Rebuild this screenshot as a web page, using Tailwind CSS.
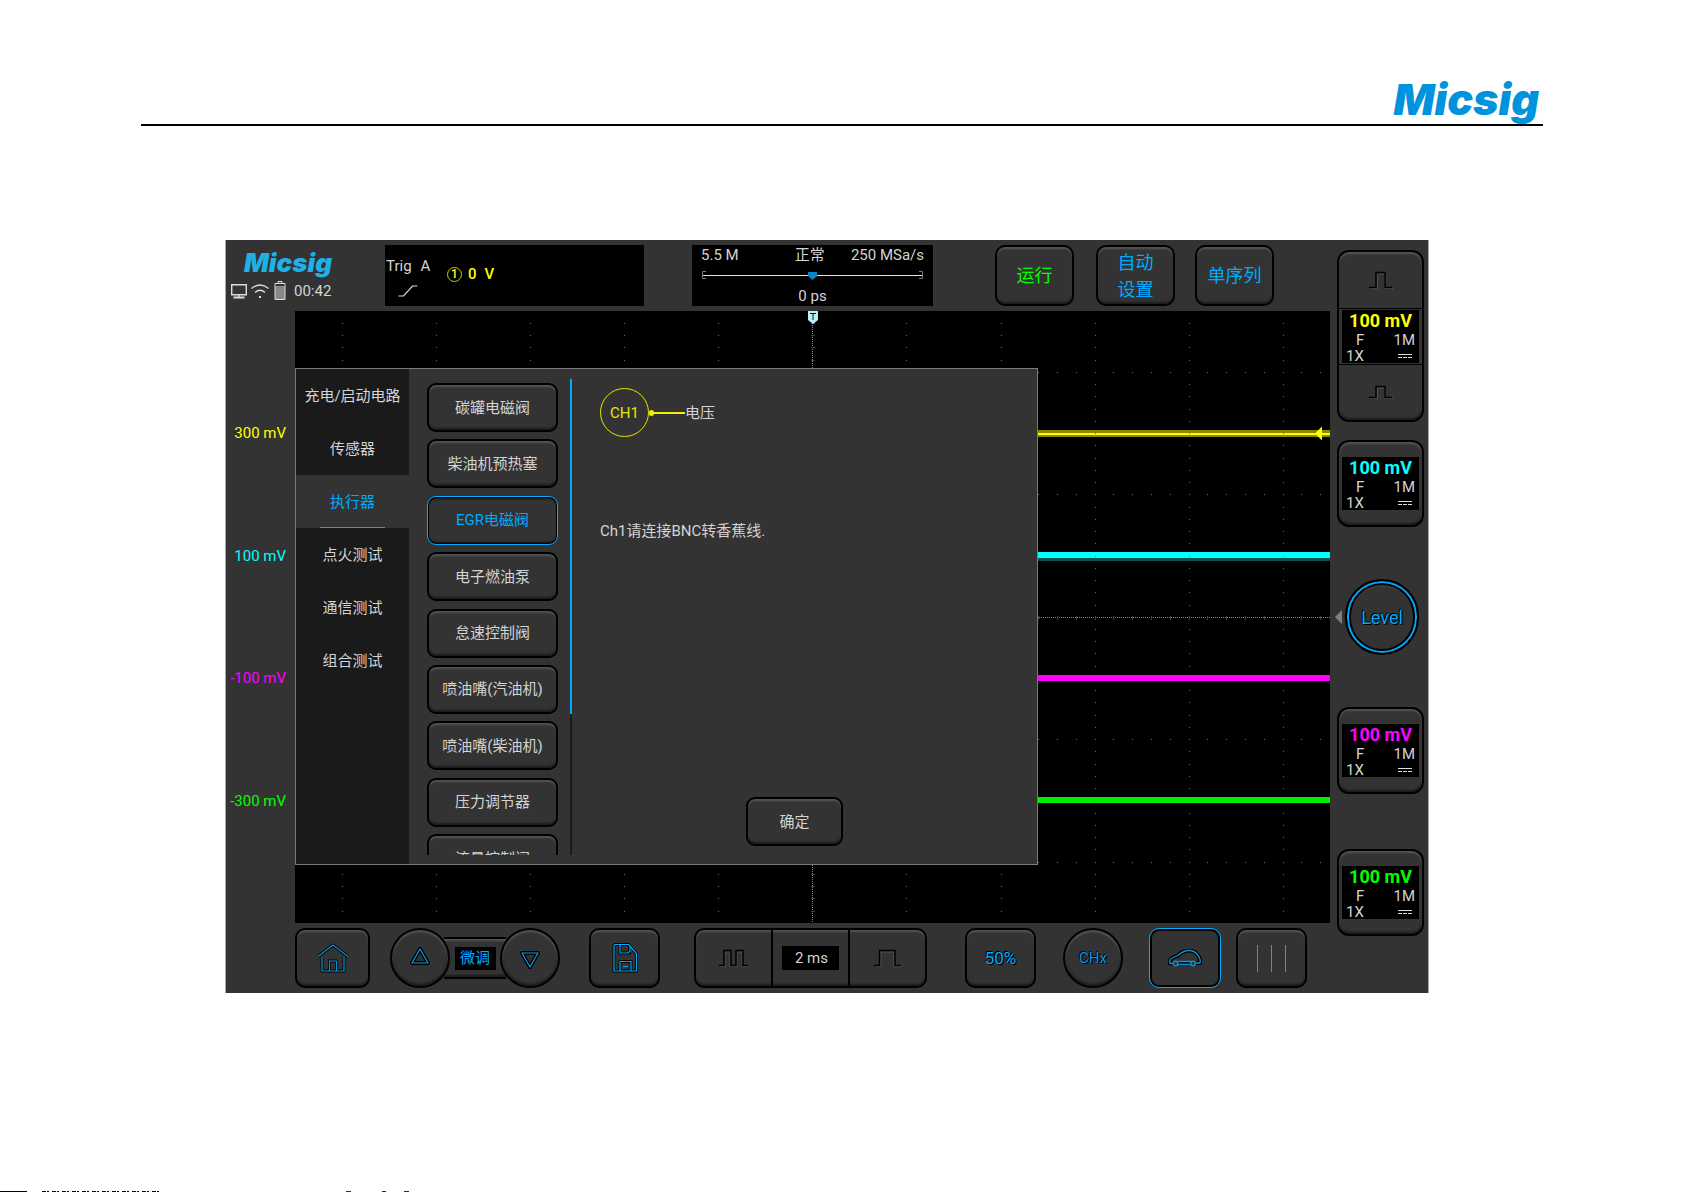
<!DOCTYPE html>
<html lang="zh-CN">
<head>
  <meta charset="UTF-8" />
  <meta name="viewport" content="width=device-width, initial-scale=1.0"/>
  <title>Micsig</title>
  <script src="https://cdn.jsdelivr.net/npm/@tailwindcss/browser@4"></script>
</head>
<body class="flex min-h-screen flex-col bg-white font-['Roboto','Noto_Sans_CJK_SC',sans-serif] text-[15px] leading-5 text-[#d4d4d4]">

  <!-- Page header -->
  <header class="mr-[142px] ml-[141px] mt-[76px] flex h-[50px] justify-end border-b-2 border-black pr-1">
    <div class="font-['Inter',sans-serif] text-[43px] leading-[46px] font-black italic text-[#0093dd]">Micsig</div>
  </header>

  <!-- Oscilloscope screen -->
  <main class="mt-[114px] mr-[256px] ml-[225px] grid grid-cols-[69px_minmax(0,1fr)_98px] grid-rows-[71px_612px_70px] border-r border-l border-[#a8a8a8] bg-[#333]">

    <!-- Top bar -->
    <div class="col-span-2 flex items-start pt-[5px]">
      <div class="w-[159px] shrink-0 pl-1">
        <div class="pt-[6px] pl-[14px] font-['Inter',sans-serif] text-[26px] leading-[24px] font-black italic text-[#1fb0e6]">Micsig</div>
        <div class="mt-[6px] flex items-center gap-[3px]">
          <svg class="h-[20px] w-[18px]" viewBox="0 0 18 20" fill="none" stroke="#ddd" stroke-width="1.4">
            <path d="M1.7 3.7h14.6v10H1.7zM9 14v2"/><path d="M3.500 16.500h11" stroke-width="2"/>
          </svg>
          <svg class="h-[20px] w-[18px]" viewBox="0 0 18 20" fill="none" stroke="#ddd" stroke-width="1.3">
            <path d="M0.500 7.500q8.500-7 17 0M4 11.500q5-4.500 10 0"/><path d="M8 16h2" stroke-width="2"/>
          </svg>
          <svg class="ml-[2px] h-[20px] w-[12px]" viewBox="0 0 12 20" fill="none" stroke="#ddd">
            <path d="M1 2.500h10v16H1z" fill="#888"/><path d="M1.500 3h9v2h-9z" fill="#333" stroke="none"/><path d="M4 2V0.500h4V2"/>
          </svg>
          <span class="ml-[5px]">00:42</span>
        </div>
      </div>
      <div class="flex h-[61px] w-[259px] shrink-0 bg-black">
        <div class="w-[62px] pt-[11px] pl-px">
          <div class="flex gap-[9px]"><span>Trig</span><span>A</span></div>
          <svg class="mt-2 ml-3 h-[14px] w-[20px]" viewBox="0 0 20 14" fill="none" stroke="#ddd" stroke-width="1.2"><path d="M0.500 12h5l9-10h5"/></svg>
        </div>
        <div class="flex h-[58px] items-center font-medium text-[#ff0]">
          <span class="flex h-[15px] w-[15px] items-center justify-center rounded-full border border-[#cc0] text-[12px]">1</span>
          <span class="ml-[6px]">0</span><span class="ml-2">V</span>
        </div>
      </div>
      <div class="ml-[48px] flex h-[61px] w-[241px] shrink-0 flex-col bg-black px-[9px]">
        <div class="flex justify-between"><span>5.5 M</span><span class="pl-[30px]">正常</span><span>250 MSa/s</span></div>
        <svg class="mt-1 h-[12px] w-full" viewBox="0 0 223 12" fill="none">
          <path d="M5 2.500H1.500v7H5M218 2.500h3.500v7H218" stroke="#77778c"/>
          <path d="M2 6.500h219" stroke="#ff0" stroke-width="1.200"/>
          <path d="M107 3h9v4l-4.500 4L107 7z" fill="#0a86c8"/>
        </svg>
        <div class="mt-[5px] text-center">0 ps</div>
      </div>
      <button class="ml-[62px] h-[61px] w-[79px] shrink-0 rounded-[10px] border-2 border-black text-[18px] text-[#0f0] shadow-[inset_0_2px_2px_#555,inset_0_-2px_2px_#1c1c1c]">运行</button>
      <button class="ml-[22px] h-[61px] w-[79px] shrink-0 rounded-[10px] border-2 border-black px-4 text-[18px] leading-[27px] text-[#0af] shadow-[inset_0_2px_2px_#555,inset_0_-2px_2px_#1c1c1c]">自动<br>设置</button>
      <button class="ml-[20px] h-[61px] w-[79px] shrink-0 rounded-[10px] border-2 border-black text-[18px] text-[#0af] shadow-[inset_0_2px_2px_#555,inset_0_-2px_2px_#1c1c1c]">单序列</button>
    </div>

    <!-- Channel column -->
    <aside class="row-span-3 flex flex-col items-center pt-[10px] pl-[3px]">
      <div class="flex h-[172px] w-[87px] flex-col rounded-[12px] border-2 border-black shadow-[inset_0_2px_2px_#555,inset_0_-2px_2px_#1c1c1c]">
        <button class="flex flex-1 items-center justify-center border-b border-black" aria-label="CH1 +">
          <svg class="h-[18px] w-[24px]" viewBox="0 0 24 18" fill="none"><path d="M1 17.500h7.500V3h7v14.500H24" stroke="#555"/><path d="M0 16.500h7V1.500h9v15h7" stroke="#000" stroke-width="1.500"/></svg>
        </button>
        <div class="mx-auto my-px h-[53px] w-[77px] bg-black px-[4px]">
          <div class="text-center text-[18px] leading-[21px] font-bold text-[#ff0]">100 mV</div>
          <div class="flex justify-between pl-[10px] leading-[18px]"><span>F</span><span>1M</span></div>
          <div class="flex items-center justify-between pr-[3px] leading-[14px]"><span>1X</span><svg class="h-[6px] w-[14px]" viewBox="0 0 14 6" stroke="#ddd"><path d="M0 1.500h14"/><path d="M0 4.500h14" stroke-dasharray="4 1"/></svg></div>
        </div>
        <button class="flex flex-1 items-center justify-center border-t border-black" aria-label="CH1 -">
          <svg class="h-[14px] w-[24px]" viewBox="0 0 24 14" fill="none"><path d="M1 13.500h7.500V3h7v10.500H24" stroke="#555"/><path d="M0 12.500h7V1.500h9v11h7" stroke="#000" stroke-width="1.500"/></svg>
        </button>
      </div>
      <button class="mt-[18px] h-[87px] w-[87px] rounded-[12px] border-2 border-black px-[3px] shadow-[inset_0_2px_2px_#555,inset_0_-2px_2px_#1c1c1c]">
        <div class="h-[53px] bg-black px-[4px]">
          <div class="text-center text-[18px] leading-[21px] font-bold text-[#0ff]">100 mV</div>
          <div class="flex justify-between pl-[10px] leading-[18px]"><span>F</span><span>1M</span></div>
          <div class="flex items-center justify-between pr-[3px] leading-[14px]"><span>1X</span><svg class="h-[6px] w-[14px]" viewBox="0 0 14 6" stroke="#ddd"><path d="M0 1.500h14"/><path d="M0 4.500h14" stroke-dasharray="4 1"/></svg></div>
        </div>
      </button>
      <div class="relative mt-[52px] h-[76px] w-[87px]">
        <svg class="absolute top-[31px] -left-[2px] h-[14px] w-[7px]" viewBox="0 0 7 14"><path d="M0 7l7-7v14z" fill="#808080"/></svg>
        <button class="ml-[8px] h-[76px] w-[74px] rounded-full border-2 border-black pt-px text-[18px] text-[#0af] shadow-[inset_0_0_0_2px_#0af,inset_0_0_0_4px_#000,inset_0_6px_3px_-1px_#444] [text-shadow:1px_1px_#000,-1px_-1px_#000]">Level</button>
      </div>
      <button class="mt-[52px] h-[87px] w-[87px] rounded-[12px] border-2 border-black px-[3px] shadow-[inset_0_2px_2px_#555,inset_0_-2px_2px_#1c1c1c]">
        <div class="h-[53px] bg-black px-[4px]">
          <div class="text-center text-[18px] leading-[21px] font-bold text-[#f0f]">100 mV</div>
          <div class="flex justify-between pl-[10px] leading-[18px]"><span>F</span><span>1M</span></div>
          <div class="flex items-center justify-between pr-[3px] leading-[14px]"><span>1X</span><svg class="h-[6px] w-[14px]" viewBox="0 0 14 6" stroke="#ddd"><path d="M0 1.500h14"/><path d="M0 4.500h14" stroke-dasharray="4 1"/></svg></div>
        </div>
      </button>
      <button class="mt-[55px] h-[87px] w-[87px] rounded-[12px] border-2 border-black px-[3px] shadow-[inset_0_2px_2px_#555,inset_0_-2px_2px_#1c1c1c]">
        <div class="h-[53px] bg-black px-[4px]">
          <div class="text-center text-[18px] leading-[21px] font-bold text-[#0f0]">100 mV</div>
          <div class="flex justify-between pl-[10px] leading-[18px]"><span>F</span><span>1M</span></div>
          <div class="flex items-center justify-between pr-[3px] leading-[14px]"><span>1X</span><svg class="h-[6px] w-[14px]" viewBox="0 0 14 6" stroke="#ddd"><path d="M0 1.500h14"/><path d="M0 4.500h14" stroke-dasharray="4 1"/></svg></div>
        </div>
      </button>
    </aside>

    <!-- Channel scale -->
    <div class="flex flex-col py-[61px] pr-[9px] text-right">
      <div class="flex flex-1 items-center justify-end text-[#ff0]">300 mV</div>
      <div class="flex flex-1 items-center justify-end text-[#0ff]">100 mV</div>
      <div class="flex flex-1 items-center justify-end text-[#f0f]">-100 mV</div>
      <div class="flex flex-1 items-center justify-end text-[#0f0]">-300 mV</div>
    </div>

    <!-- Waveform area -->
    <div class="relative bg-black">
      <svg class="h-full w-full" viewBox="0 0 1035 612" preserveAspectRatio="none" fill="none" shape-rendering="crispEdges">
        <!-- traces -->
        <path d="M0 122.500h1035" stroke="#8a8a00" stroke-width="7"/>
        <path d="M0 122.500h1035" stroke="#ff0" stroke-width="2"/>
        <path d="M0 248h1035" stroke="#055" stroke-width="4"/>
        <path d="M0 244h1035" stroke="#0ff" stroke-width="6"/>
        <path d="M0 367h1035" stroke="#f0f" stroke-width="6"/>
        <path d="M0 489h1035" stroke="#0e0" stroke-width="6"/>
        <!-- grid -->
        <path d="M47.500 12v600M141.500 12v600M235.500 12v600M329.500 12v600M423.500 12v600M611.500 12v600M706.500 12v600M800.500 12v600M894.500 12v600M988.500 12v600" stroke="#707070" stroke-dasharray="1 11.24"/>
        <path d="M10 61.500h1025M10 183.500h1025M10 428.500h1025M10 551.500h1025" stroke="#707070" stroke-dasharray="1 17.8"/>
        <path d="M517.500 0v612M0 306.500h1035" stroke="#888" stroke-dasharray="1 1"/>
        <path d="M517.500 12v600" stroke="#444" stroke-width="4" stroke-dasharray="1 11.24"/>
        <path d="M10 306.500h1025" stroke="#444" stroke-width="4" stroke-dasharray="1 17.8"/>
        <!-- trigger level -->
        <path d="M1020 122.500l7-7v14z" fill="#ff0" shape-rendering="auto"/>
      </svg>
      <svg class="absolute top-0 left-1/2 h-[13px] w-[10px] -translate-x-1/2" viewBox="0 0 10 13" fill="none"><path d="M0 0h10v9l-5 4-5-4z" fill="#b8f2f8"/><path d="M2 2.500h6M5 2v7" stroke="#111"/></svg>

      <!-- Automotive test dialog -->
      <section class="absolute top-[57px] left-0 flex h-[497px] w-[743px] border border-[#7a7a7a] bg-[#333]">
        <nav class="flex w-[113px] shrink-0 flex-col bg-[#1a1a1a]">
          <button class="h-[53px]">充电/启动电路</button>
          <button class="h-[53px]">传感器</button>
          <button class="flex h-[53px] flex-col items-center justify-between bg-[#333] text-[#0af]"><span class="pt-[17px]">执行器</span><span class="h-px w-[65px] bg-[#0af]"></span></button>
          <button class="h-[53px]">点火测试</button>
          <button class="h-[53px]">通信测试</button>
          <button class="h-[53px]">组合测试</button>
        </nav>
        <div class="mt-[10px] mb-[9px] ml-[18px] w-[131px] shrink-0 overflow-hidden pt-1">
          <div class="flex h-[500px] flex-col justify-between">
            <button class="h-[49px] rounded-[9px] border-2 border-black shadow-[inset_0_2px_2px_#555,inset_0_-2px_2px_#1c1c1c]">碳罐电磁阀</button>
            <button class="h-[49px] rounded-[9px] border-2 border-black shadow-[inset_0_2px_2px_#555,inset_0_-2px_2px_#1c1c1c]">柴油机预热塞</button>
            <button class="h-[49px] rounded-[9px] border border-[#0af] text-[#0af] shadow-[inset_0_0_0_1px_#000,inset_0_2px_2px_#111,inset_0_-2px_2px_#111]">EGR电磁阀</button>
            <button class="h-[49px] rounded-[9px] border-2 border-black shadow-[inset_0_2px_2px_#555,inset_0_-2px_2px_#1c1c1c]">电子燃油泵</button>
            <button class="h-[49px] rounded-[9px] border-2 border-black shadow-[inset_0_2px_2px_#555,inset_0_-2px_2px_#1c1c1c]">怠速控制阀</button>
            <button class="h-[49px] rounded-[9px] border-2 border-black shadow-[inset_0_2px_2px_#555,inset_0_-2px_2px_#1c1c1c]">喷油嘴(汽油机)</button>
            <button class="h-[49px] rounded-[9px] border-2 border-black shadow-[inset_0_2px_2px_#555,inset_0_-2px_2px_#1c1c1c]">喷油嘴(柴油机)</button>
            <button class="h-[49px] rounded-[9px] border-2 border-black shadow-[inset_0_2px_2px_#555,inset_0_-2px_2px_#1c1c1c]">压力调节器</button>
            <button class="h-[49px] rounded-[9px] border-2 border-black shadow-[inset_0_2px_2px_#555,inset_0_-2px_2px_#1c1c1c]">流量控制阀</button>
          </div>
        </div>
        <div class="mt-[10px] mb-[9px] ml-[12px] w-[2px] shrink-0 bg-[#1a1a1a]"><div class="h-[335px] bg-[#0af]"></div></div>
        <div class="flex flex-1 flex-col pt-[19px] pb-[18px] pl-[28px]">
          <div class="flex items-center">
            <span class="flex h-[49px] w-[49px] items-center justify-center rounded-full border border-[#e6e600] text-[#e6e600]">CH1</span>
            <span class="h-[6px] w-[5px] rounded-full bg-[#f0f000]"></span>
            <span class="h-[2px] w-[31px] bg-[#f0f000]"></span>
            <span>电压</span>
          </div>
          <p class="mt-[84px]">Ch1请连接BNC转香蕉线.</p>
          <button class="mt-auto ml-[146px] h-[49px] w-[97px] rounded-[9px] border-2 border-black shadow-[inset_0_2px_2px_#555,inset_0_-2px_2px_#1c1c1c]">确定</button>
        </div>
      </section>
    </div>

    <!-- Bottom bar -->
    <div class="col-span-2 flex items-start pt-[5px] pl-[69px]">
      <button class="flex h-[60px] w-[75px] shrink-0 items-center justify-center rounded-[10px] border-2 border-black shadow-[inset_0_2px_2px_#555,inset_0_-2px_2px_#1c1c1c]" aria-label="Home">
        <svg class="h-[30px] w-[32px]" viewBox="0 0 32 30" fill="none" stroke-linejoin="round"><g stroke="#000" stroke-width="3"><path d="M1 13.500L16 2l15 11.500M5 14v14h22V14M12.500 28V18h7v10"/></g><g stroke="#0a95e0" stroke-width="1.200"><path d="M1 13.500L16 2l15 11.500M5 14v14h22V14M12.500 28V18h7v10"/></g></svg>
      </button>
      <div class="ml-5 flex h-[60px] shrink-0 items-center">
        <button class="z-10 flex h-[60px] w-[60px] items-center justify-center rounded-full border-2 border-black bg-[#333] shadow-[inset_0_2px_2px_#555,inset_0_-2px_2px_#1c1c1c]" aria-label="Up">
          <svg class="mb-1 h-[18px] w-[20px]" viewBox="0 0 20 18" fill="none" stroke-linejoin="round"><path d="M10 2l8 14H2z" stroke="#000" stroke-width="4"/><path d="M10 2l8 14H2z" stroke="#0a9fee" stroke-width="1.200"/></svg>
        </button>
        <div class="-mx-[6px] flex h-[42px] w-[62px] items-center justify-center border-y-2 border-black shadow-[inset_0_2px_2px_#555,inset_0_-2px_2px_#1c1c1c]">
          <span class="h-[23px] w-[41px] bg-black text-center leading-[23px] text-[#0af]">微调</span>
        </div>
        <button class="z-10 flex h-[60px] w-[60px] items-center justify-center rounded-full border-2 border-black bg-[#333] shadow-[inset_0_2px_2px_#555,inset_0_-2px_2px_#1c1c1c]" aria-label="Down">
          <svg class="mt-1 h-[18px] w-[20px]" viewBox="0 0 20 18" fill="none" stroke-linejoin="round"><path d="M10 16l8-14H2z" stroke="#000" stroke-width="4"/><path d="M10 16l8-14H2z" stroke="#0a9fee" stroke-width="1.200"/></svg>
        </button>
      </div>
      <button class="ml-[29px] flex h-[60px] w-[71px] shrink-0 items-center justify-center rounded-[10px] border-2 border-black shadow-[inset_0_2px_2px_#555,inset_0_-2px_2px_#1c1c1c]" aria-label="Save">
        <svg class="h-[30px] w-[26px]" viewBox="0 0 26 30" fill="none" stroke-linejoin="round"><g stroke="#000" stroke-width="3"><path d="M3 1.500h13.500l8 9V28H2V2.500zM8 2v8h9.500v-7M8 28V18.500h11V28"/></g><g stroke="#0af" stroke-width="1.200"><path d="M3 1.500h13.500l8 9V28H2V2.500zM8 2v8h8l2-2V3M8 28V18.500h11V28M11 23.500h5"/></g></svg>
      </button>
      <div class="ml-[34px] flex h-[60px] w-[233px] shrink-0 rounded-[10px] border-2 border-black shadow-[inset_0_2px_2px_#555,inset_0_-2px_2px_#1c1c1c]">
        <button class="flex flex-1 items-center justify-center" aria-label="Zoom out">
          <svg class="h-[18px] w-[30px]" viewBox="0 0 30 18" fill="none"><path d="M1 17.500h5V3h5v14.500h7V3h5v14.500h6" stroke="#555"/><path d="M0 16.500h5V1.500h7v15h5V1.500h7v15h5" stroke="#000" stroke-width="1.500"/></svg>
        </button>
        <div class="flex w-[79px] items-center justify-center border-x-2 border-black"><span class="h-[24px] w-[57px] bg-black pl-[2px] text-center leading-[24px]">2 ms</span></div>
        <button class="flex flex-1 items-center justify-center" aria-label="Zoom in">
          <svg class="h-[18px] w-[28px]" viewBox="0 0 28 18" fill="none"><path d="M1 17.500h6V3h13v14.500h8" stroke="#555"/><path d="M0 16.500h5.500V1.500H21v15h6" stroke="#000" stroke-width="1.500"/></svg>
        </button>
      </div>
      <button class="ml-[38px] h-[60px] w-[71px] shrink-0 rounded-[10px] border-2 border-black text-[17px] text-[#0af] shadow-[inset_0_2px_2px_#555,inset_0_-2px_2px_#1c1c1c] [text-shadow:1px_1px_#000,-1px_-1px_#000]">50%</button>
      <button class="ml-[27px] h-[60px] w-[60px] shrink-0 rounded-full border-2 border-black text-[15px] text-[#0a95e0] shadow-[inset_0_2px_2px_#555,inset_0_-2px_2px_#1c1c1c] [text-shadow:1px_1px_#000,-1px_-1px_#000]">CHx</button>
      <button class="ml-[26px] flex h-[60px] w-[72px] shrink-0 items-center justify-center rounded-[10px] border border-[#0af] shadow-[inset_0_0_0_2px_#000,inset_0_3px_2px_#333]" aria-label="Automotive">
        <svg class="h-[18px] w-[34px]" viewBox="0 0 34 18" fill="none" stroke-linejoin="round"><g stroke="#000" stroke-width="4"><path d="M5 14.500H2q-1-4 3-6l5-2q5-5 11-5 6 0 9 5 3 4 2 7.500h-4M10 14.500h13"/></g><g stroke="#0a95e0" stroke-width="1.300"><path d="M5 14.500H2q-1-4 3-6l5-2q5-5 11-5 6 0 9 5 3 4 2 7.500h-4M10 15.500h13M10 12.500h13"/><circle cx="7.500" cy="14.500" r="2.300"/><circle cx="25" cy="14.500" r="2.300"/></g></svg>
      </button>
      <button class="ml-[15px] flex h-[60px] w-[71px] shrink-0 items-center justify-center gap-[13px] rounded-[10px] border-2 border-black shadow-[inset_0_2px_2px_#555,inset_0_-2px_2px_#1c1c1c]" aria-label="Menu">
        <span class="h-[27px] w-px bg-[#0af]"></span><span class="h-[27px] w-px bg-[#0af]"></span><span class="h-[27px] w-px bg-[#0af]"></span>
      </button>
    </div>
  </main>

  <!-- Next page edge -->
  <footer class="mt-auto h-px">
    <svg class="block h-px w-full" stroke="#000"><path d="M0 0.500h27"/><path d="M42 0.500h118" stroke-dasharray="4 1 2 3"/><path d="M346 0.500h5M382 0.500h4M404 0.500h5" stroke="#226"/></svg>
  </footer>
</body>
</html>
